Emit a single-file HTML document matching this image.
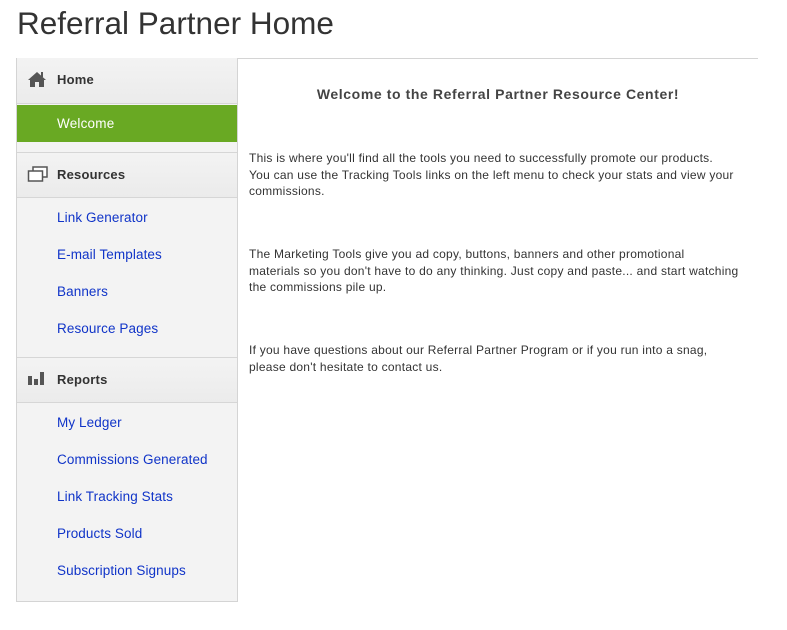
<!DOCTYPE html>
<html><head><style>
body{margin:0;background:#fff;font-family:"Liberation Sans",sans-serif;width:787px;height:630px;overflow:hidden;position:relative}
h1{position:absolute;left:17px;top:5px;margin:0;font-weight:normal;font-size:31.5px;color:#333}
.hr{position:absolute;left:16px;top:58px;width:742px;height:1px;background:#d4d4d4}
.side{position:absolute;left:16px;top:58px;width:220px;height:542px;border:1px solid #d4d4d4;background:#f3f3f3}
.hd{position:absolute;left:0;width:220px;height:46px;background:linear-gradient(#f3f3f3,#ebebeb);border-top:1px solid #d6d6d6;border-bottom:1px solid #d6d6d6;font-size:13px;font-weight:bold;color:#333;box-sizing:border-box;letter-spacing:0.2px}
.hd span{position:absolute;left:40px;top:14px}
.hd svg{position:absolute;left:10px;top:12px}
.wel{position:absolute;left:0;top:46px;width:220px;height:37px;background:#69a923;color:#fff;font-size:13.5px;letter-spacing:0.2px}
.wel span{position:absolute;left:40px;top:11px}
.l{position:absolute;left:40px;font-size:13.5px;color:#1034c8;letter-spacing:0.1px}
.c{position:absolute;left:249px;font-size:12px;color:#333;line-height:16.5px;width:520px;letter-spacing:0.25px;white-space:nowrap}
</style></head><body>
<h1>Referral Partner Home</h1>
<div class="hr"></div>
<div class="side">
<div class="hd" style="top:-1px;border-top:none"><svg width="20" height="18" viewBox="0 0 20 18"><path d="M10 2 L1 10 L3 10 L3 17 L8 17 L8 12 L12 12 L12 17 L17 17 L17 10 L19 10 Z" fill="#555"/><rect x="14" y="2" width="2" height="5" fill="#555"/></svg><span>Home</span></div>
<div class="wel"><span>Welcome</span></div>
<div class="hd" style="top:93px"><svg width="22" height="18" viewBox="0 0 22 18"><rect x="6" y="2" width="14" height="10" fill="#fff" stroke="#555" stroke-width="1.5"/><rect x="1.5" y="6" width="14" height="10" fill="#fff" stroke="#555" stroke-width="1.5"/></svg><span>Resources</span></div>
<div class="l" style="top:151px">Link Generator</div>
<div class="l" style="top:188px">E-mail Templates</div>
<div class="l" style="top:225px">Banners</div>
<div class="l" style="top:262px">Resource Pages</div>
<div class="hd" style="top:298px"><svg width="20" height="18" viewBox="0 0 20 18"><rect x="1" y="6" width="4" height="9" fill="#555"/><rect x="7" y="9" width="4" height="6" fill="#555"/><rect x="13" y="2" width="4" height="13" fill="#555"/></svg><span>Reports</span></div>
<div class="l" style="top:356px">My Ledger</div>
<div class="l" style="top:393px">Commissions Generated</div>
<div class="l" style="top:430px">Link Tracking Stats</div>
<div class="l" style="top:467px">Products Sold</div>
<div class="l" style="top:504px">Subscription Signups</div>
</div>
<div style="position:absolute;left:238px;width:520px;top:86px;text-align:center;font-size:14px;font-weight:bold;color:#444;letter-spacing:0.6px">Welcome to the Referral Partner Resource Center!</div>
<div class="c" style="top:150px">This is where you'll find all the tools you need to successfully promote our products.<br>You can use the Tracking Tools links on the left menu to check your stats and view your<br>commissions.</div>
<div class="c" style="top:246px">The Marketing Tools give you ad copy, buttons, banners and other promotional<br>materials so you don't have to do any thinking. Just copy and paste... and start watching<br>the commissions pile up.</div>
<div class="c" style="top:342px">If you have questions about our Referral Partner Program or if you run into a snag,<br>please don't hesitate to contact us.</div>
</body></html>
